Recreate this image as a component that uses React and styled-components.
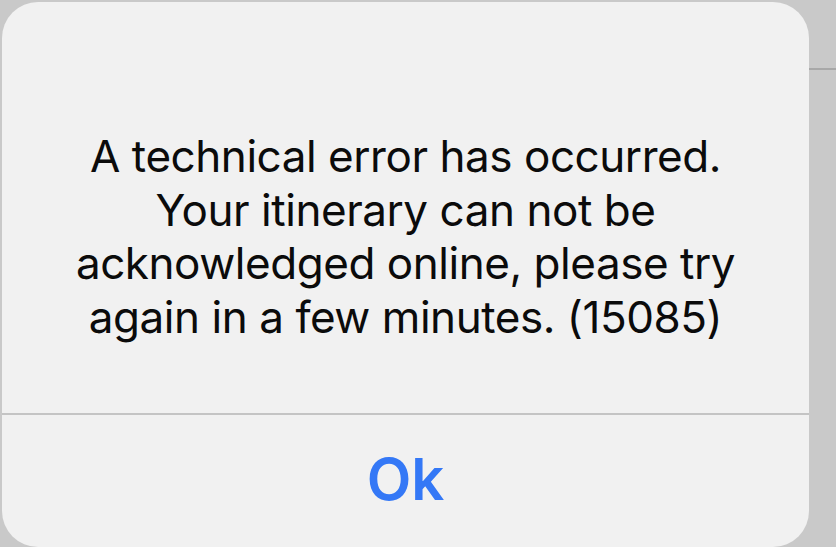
import React from "react";
import styled, { createGlobalStyle } from "styled-components";

const GlobalStyle = createGlobalStyle`
  html, body {
    margin: 0;
    padding: 0;
    background: #c9c9c9;
    overflow: hidden;
  }
  body {
    font-family: Inter, "Noto Sans", "Liberation Sans", sans-serif;
    -webkit-font-smoothing: antialiased;
  }
`;

const Screen = styled.div`
  width: 836px;
  height: 547px;
  display: flex;
  align-items: flex-start;
  background: #c9c9c9;
`;

const Alert = styled.div`
  width: 807px;
  height: 545px;
  margin: 2px 0 0 2px;
  background: #f1f1f1;
  border-radius: 36px;
  display: flex;
  flex-direction: column;
  overflow: hidden;
`;

const Message = styled.p`
  margin: 0;
  height: 411px;
  box-sizing: border-box;
  padding-top: 128px;
  color: #0b0b0b;
  font-size: 44px;
  line-height: 53.5px;
  letter-spacing: -0.45px;
  text-align: center;
`;

const Divider = styled.div`
  height: 2px;
  background: #c4c4c4;
`;

const Action = styled.button`
  flex: 1;
  border: none;
  background: transparent;
  color: #3478f6;
  font-family: inherit;
  font-size: 58px;
  font-weight: 600;
  padding: 0 0 4px;
  cursor: pointer;
`;

const Side = styled.div`
  flex: 1;
  padding-top: 68px;
`;

const Rule = styled.div`
  height: 2px;
  background: #a8a8a8;
`;

export default function App() {
  return (
    <>
      <GlobalStyle />
      <Screen>
        <Alert>
          <Message>
            A technical error has occurred.
            <br />
            Your itinerary can not be
            <br />
            acknowledged online, please try
            <br />
            again in a few minutes. (15085)
          </Message>
          <Divider />
          <Action>Ok</Action>
        </Alert>
        <Side>
          <Rule />
        </Side>
      </Screen>
    </>
  );
}
